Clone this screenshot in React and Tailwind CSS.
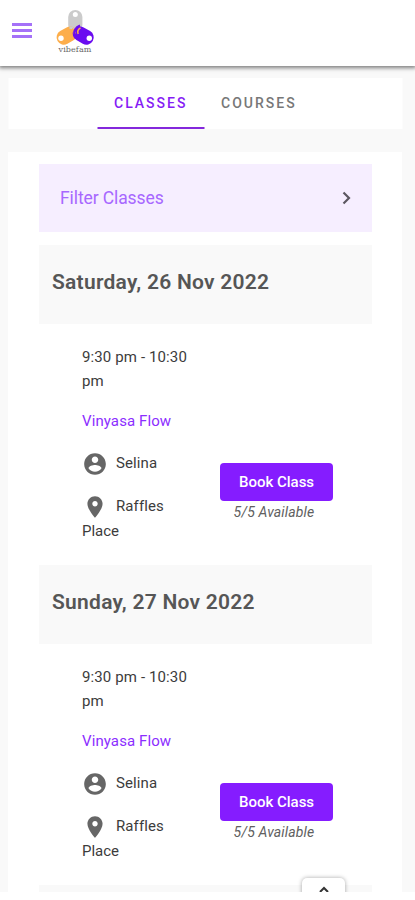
import React from "react";

const days = ["Saturday, 26 Nov 2022", "Sunday, 27 Nov 2022"];

function Logo() {
  return (
    <svg width="40" height="34" viewBox="0 0 40 34" className="block overflow-visible">
      <rect x="13.200" y="1" width="14.200" height="22" rx="7.100" fill="#cbcbcb" />
      <rect x="1" y="19.300" width="22" height="14.600" rx="7.300" transform="rotate(-30 12 26.5)" fill="#fdae4b" />
      <rect x="17.300" y="19.300" width="22" height="14.600" rx="7.300" transform="rotate(30 28.300 26.5)" fill="#6a0cf0" />
      <path d="M14.500 18.500c3 0 5 2 5 5.500" fill="none" stroke="#cbcbcb" strokeWidth="2.600" />
      <path d="M17 20c1.800 1 2.800 2.800 2.500 5" fill="none" stroke="#fdae4b" strokeWidth="2.400" />
      <path d="M25 16.500c-4 1.500-7 6-5 10" fill="none" stroke="#6a0cf0" strokeWidth="2.400" />
      <path d="M25.500 19c-2.400 1-3.500 3.500-2.300 6" fill="none" stroke="#fdae4b" strokeWidth="1.600" />
      <circle cx="20.300" cy="5.500" r="2.500" fill="#fff" />
      <circle cx="6" cy="29.300" r="2.700" fill="#fff" />
      <circle cx="34.300" cy="29.300" r="2.700" fill="#fff" />
    </svg>
  );
}

function ClassDay({ date }) {
  return (
    <section className="h-[320px]">
      <div className="h-[79px] bg-[#f9f9f9] pl-[13px] pt-[21px]">
        <h2 className="text-[21px] leading-8 font-semibold tracking-[0.260px] text-[#565656]">{date}</h2>
      </div>
      <div className="flex pl-[43px] pt-[21px] text-[15px] leading-6 text-[#3c3c3c]">
        <div className="w-[138px]">
          <p className="w-[120px] tracking-[0.120px]">9:30 pm - 10:30 pm</p>
          <p className="mt-4 tracking-[0.100px] text-[#8c2eff]">Vinyasa Flow</p>
          <div className="mt-[18px] flex h-6 items-center">
            <svg width="26" height="26" viewBox="0 0 24 24" fill="#666" className="mt-0.5">
              <path d="M12 2C6.480 2 2 6.480 2 12s4.480 10 10 10 10-4.480 10-10S17.520 2 12 2zm0 3c1.660 0 3 1.340 3 3s-1.340 3-3 3-3-1.340-3-3 1.340-3 3-3zm0 14.200c-2.500 0-4.710-1.280-6-3.220.030-1.990 4-3.080 6-3.080 1.990 0 5.970 1.090 6 3.080-1.290 1.940-3.500 3.220-6 3.220z" />
            </svg>
            <span className="ml-2 tracking-[0.100px]">Selina</span>
          </div>
          <div className="mt-[19px] flex h-6 items-center">
            <svg width="26" height="26" viewBox="0 0 24 24" fill="#666" className="mt-0.5">
              <path d="M12 2C8.130 2 5 5.130 5 9c0 5.250 7 13 7 13s7-7.750 7-13c0-3.870-3.130-7-7-7zm0 9.500c-1.380 0-2.500-1.120-2.500-2.500s1.120-2.500 2.500-2.500 2.500 1.120 2.500 2.500-1.120 2.500-2.500 2.500z" />
            </svg>
            <span className="ml-2 tracking-[0.100px]">Raffles</span>
          </div>
          <p className="pt-px">Place</p>
        </div>
        <div className="w-[114px] pt-[118px]">
          <button className="block h-[38px] w-[113px] rounded-[4px] bg-[#851cff] text-[15px] font-medium text-white">Book Class</button>
          <p className="mt-[3px] pr-[6px] text-center text-[14px] leading-4 tracking-[0.150px] italic text-[#606060]">5/5 Available</p>
        </div>
      </div>
    </section>
  );
}

export default function App() {
  return (
    <div className="h-[900px] w-[415px] overflow-hidden bg-white font-['Roboto','Liberation_Sans',sans-serif]">
      <div className="relative flex h-[892px] w-full flex-col overflow-hidden bg-[#f9f9f9]">
        <header className="relative flex h-[66px] shrink-0 items-start bg-white shadow-[0_1px_4px_1px_rgba(0,0,0,0.5)]">
          <div className="ml-3 mt-[23px] flex w-5 flex-col gap-[3px]">
            <span className="h-[3px] bg-[#a571f8]" />
            <span className="h-[3px] bg-[#a571f8]" />
            <span className="h-[3px] bg-[#a571f8]" />
          </div>
          <div className="ml-[23px] mt-[9px] flex w-[40px] flex-col items-center">
            <Logo />
            <span className="mt-[2px] font-['DejaVu_Serif',serif] text-[8px] leading-[10px] tracking-[0.100px] text-[#666]">vibefam</span>
          </div>
        </header>

        <nav className="mx-auto mt-3 flex h-[51px] w-[394px] shrink-0 -translate-x-[2.500px] bg-white pl-[89px] text-[14px] font-medium tracking-[2px]">
          <div className="w-[107px] border-b-2 border-[#8428dc] pt-[15px] pl-[17px] leading-5 text-[#861cf5]">CLASSES</div>
          <div className="pt-[15px] pl-[17px] leading-5 text-[#777]">COURSES</div>
        </nav>

        <main className="ml-2 mt-[23px] h-[760px] w-[394px] shrink-0 bg-white px-[31px] pt-3">
          <div className="mb-[13px] flex h-[68px] w-[333px] items-center justify-between bg-[#f6eeff] pl-[21px] pr-[20px]">
            <span className="text-[17.500px] tracking-[-0.100px] text-[#a767ff]">Filter Classes</span>
            <svg width="11" height="14" viewBox="0 0 11 14" fill="none" stroke="#5c5761" strokeWidth="2.200">
              <path d="M2.500 1.500 8 7l-5.500 5.500" />
            </svg>
          </div>
          <div className="w-[333px]">
            {days.map((date) => <ClassDay key={date} date={date} />)}
            <div className="h-[79px] bg-[#f9f9f9]" />
          </div>
        </main>

        <div className="absolute left-[302px] top-[878px] flex h-8 w-[43px] justify-center rounded-[5px] bg-white pt-[8px] shadow-[0_0_4px_rgba(0,0,0,0.35)]">
          <svg width="10" height="8" viewBox="0 0 10 8" fill="none" stroke="#333" strokeWidth="2">
            <path d="m1 6 4-4 4 4" />
          </svg>
        </div>
      </div>
    </div>
  );
}
